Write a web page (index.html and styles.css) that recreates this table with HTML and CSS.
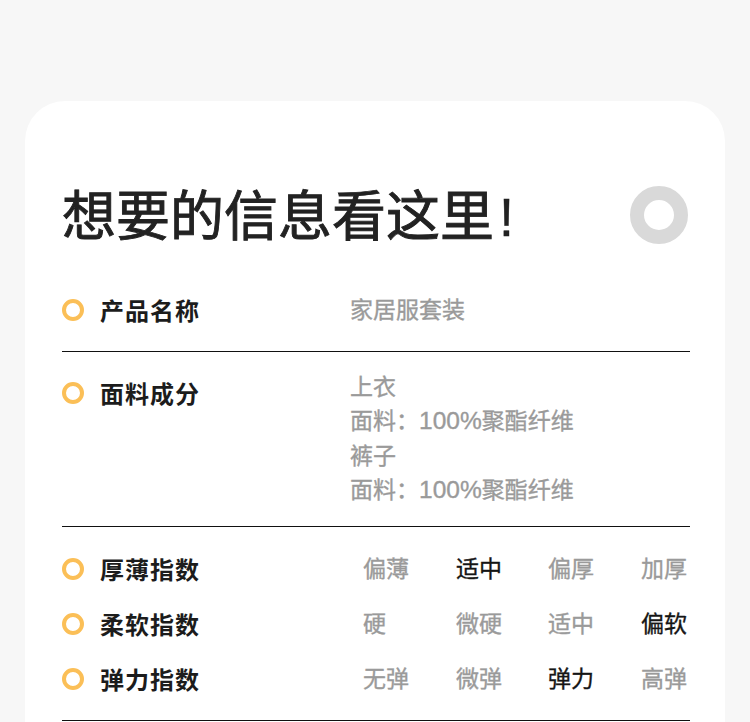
FILE: index.html
```html
<!DOCTYPE html>
<html lang="zh-CN">
<head>
<meta charset="utf-8">
<title>想要的信息看这里</title>
<link rel="stylesheet" href="styles.css">
</head>
<body>
<div class="page">
  <section class="card">
    <header class="header">
      <h1 class="title">想要的信息看这里<span class="bang">!</span></h1>
      <span class="deco-ring"></span>
    </header>
    <div class="row">
      <div class="label"><span class="dot"></span>产品名称</div>
      <div class="value">家居服套装</div>
    </div>
    <div class="row row-multi">
      <div class="label"><span class="dot"></span>面料成分</div>
      <div class="value value-multi">
        <div>上衣</div>
        <div>面料：<span class="num">100%</span>聚酯纤维</div>
        <div>裤子</div>
        <div>面料：<span class="num">100%</span>聚酯纤维</div>
      </div>
    </div>
    <div class="row row-index">
      <div class="index-line">
        <div class="label"><span class="dot"></span>厚薄指数</div>
        <div class="options">
          <span class="opt">偏薄</span><span class="opt on">适中</span><span class="opt">偏厚</span><span class="opt">加厚</span>
        </div>
      </div>
      <div class="index-line">
        <div class="label"><span class="dot"></span>柔软指数</div>
        <div class="options">
          <span class="opt">硬</span><span class="opt">微硬</span><span class="opt">适中</span><span class="opt on">偏软</span>
        </div>
      </div>
      <div class="index-line">
        <div class="label"><span class="dot"></span>弹力指数</div>
        <div class="options">
          <span class="opt">无弹</span><span class="opt">微弹</span><span class="opt on">弹力</span><span class="opt">高弹</span>
        </div>
      </div>
    </div>
  </section>
</div>
</body>
</html>
```

FILE: styles.css
```css
* { box-sizing: border-box; }
html, body { margin: 0; padding: 0; }
body {
  background: #f7f7f7;
  font-family: "Liberation Sans", "Noto Sans CJK SC", sans-serif;
  color: #1c1c1c;
}
.page {
  padding: 101px 25px 0;
  height: 722px;
  overflow: hidden;
}
.card {
  background: #ffffff;
  border-radius: 40px 40px 0 0;
  padding: 84px 35px 0 37px;
  min-height: 700px;
}
.header {
  display: flex;
  align-items: center;
  justify-content: space-between;
  height: 60px;
}
.title {
  margin: 0;
  font-family: "Noto Sans CJK SC", sans-serif;
  font-size: 54px;
  line-height: 60px;
  font-weight: 400;
  color: #222222;
  -webkit-text-stroke: 0.9px #222222;
}
.bang {
  font-family: "Liberation Sans", sans-serif;
  font-weight: 400;
  margin-left: 5px;
  -webkit-text-stroke: 0.4px #222222;
}
.deco-ring {
  width: 58px;
  height: 58px;
  border-radius: 50%;
  border: 14px solid #d9d9d9;
  margin-right: 2px;
}
.row {
  display: flex;
  align-items: flex-start;
  padding: 48px 0 24px;
  border-bottom: 1px solid #111111;
}
.row-multi { padding: 24px 0 19px; }
.row-index {
  flex-direction: column;
  gap: 21px;
  padding: 25px 0 24px;
}
.index-line {
  display: flex;
  align-items: flex-start;
  width: 100%;
}
.label {
  width: 288px;
  flex: none;
  display: flex;
  align-items: center;
  gap: 16px;
  font-family: "Noto Sans CJK SC", sans-serif;
  font-size: 24px;
  line-height: 34px;
  font-weight: 700;
  color: #1c1c1c;
  letter-spacing: 1px;
}
.dot {
  width: 22px;
  height: 22px;
  border-radius: 50%;
  border: 4px solid #fbbf57;
  flex: none;
}
.value {
  font-size: 23px;
  line-height: 34px;
  color: #9a9a9a;
  -webkit-text-stroke: 0.35px #9a9a9a;
}
.value-multi {
  line-height: 34.3px;
  margin-top: -6px;
}
.num {
  font-size: 24.5px;
}
.options {
  display: grid;
  grid-template-columns: 93px 92px 93px auto;
  margin-left: 13px;
  font-size: 23px;
  line-height: 34px;
  color: #9a9a9a;
  -webkit-text-stroke: 0.35px #9a9a9a;
}
.opt.on {
  color: #151515;
  -webkit-text-stroke: 0.35px #151515;
}
```
